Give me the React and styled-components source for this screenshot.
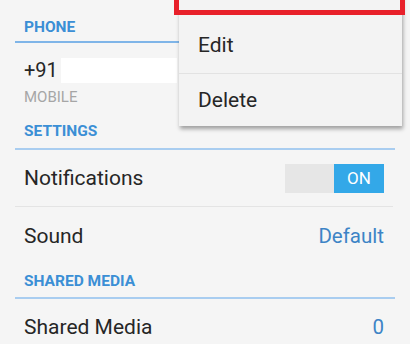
import React from "react";
import styled, { createGlobalStyle } from "styled-components";

const Global = createGlobalStyle`
  html, body { margin: 0; padding: 0; background: #f5f5f5; }
  body { font-family: Roboto, "Noto Sans", "Liberation Sans", sans-serif; -webkit-font-smoothing: antialiased; }
`;

const Page = styled.div`
  position: relative;
  width: 410px;
  height: 344px;
  overflow: hidden;
  background: #f5f5f5;
`;

const SectionHeader = styled.div`
  margin: 0 15px;
  padding: 0 9px ${(p) => p.$pb}px;
  height: ${(p) => p.$h}px;
  display: flex;
  align-items: flex-end;
  box-sizing: border-box;
  border-bottom: 2px solid ${(p) => p.$line};
  color: #3b8fd5;
  font-size: 15.5px;
  font-weight: 700;
  line-height: 18px;
`;

const PhoneBlock = styled.div`
  padding: 14px 24px 0;
  height: 64px;
  box-sizing: border-box;
`;

const PhoneLine = styled.div`
  display: flex;
  align-items: center;
  height: 26px;
  font-size: 20px;
  color: #262626;
`;

const Redacted = styled.span`
  display: inline-block;
  width: 116px;
  height: 25px;
  background: #ffffff;
  margin-left: 3px;
`;

const SubLabel = styled.div`
  margin-top: 5px;
  font-size: 15px;
  color: #a6a6a6;
`;

const Row = styled.div`
  margin: 0 17px 0 15px;
  padding: 0 9px;
  height: ${(p) => p.$h}px;
  display: flex;
  align-items: center;
  justify-content: space-between;
  box-sizing: border-box;
  border-bottom: ${(p) => (p.$divider ? "1px solid #e4e4e4" : "none")};
  font-size: 21px;
  color: #262626;
`;

const Value = styled.span`
  color: #3d84c6;
  font-size: 20.5px;
`;

const Toggle = styled.div`
  display: flex;
  width: 99px;
  height: 29px;
  background: #e6e6e6;
  justify-content: flex-end;
`;

const ToggleOn = styled.div`
  width: 50px;
  background: #33a8e8;
  color: #fff;
  font-size: 17px;
  display: flex;
  align-items: center;
  justify-content: center;
`;

const Menu = styled.div`
  position: absolute;
  left: 179px;
  top: -39px;
  width: 223px;
  background: #f3f3f3;
  box-shadow: 1px 3px 4px rgba(0, 0, 0, 0.35);
`;

const MenuItem = styled.div`
  height: ${(p) => p.$h}px;
  display: flex;
  align-items: center;
  padding-left: 19px;
  font-size: 21px;
  color: #262626;
  border-top: ${(p) => (p.$sep ? "1px solid #e2e2e2" : "none")};
  box-sizing: border-box;
`;

const Highlight = styled.div`
  position: absolute;
  left: -5px;
  top: 0;
  width: 221px;
  height: 44px;
  border: 5px solid #e8202a;
`;

export default function App() {
  return (
    <>
      <Global />
      <Page>
        <SectionHeader $h={43} $pb={5} $line="#7fb5e8">PHONE</SectionHeader>
        <PhoneBlock>
          <PhoneLine>
            +91<Redacted />
          </PhoneLine>
          <SubLabel>MOBILE</SubLabel>
        </PhoneBlock>
        <SectionHeader $h={43} $pb={8} $line="#a9cdf0">SETTINGS</SectionHeader>
        <Row $h={57} $divider>
          <span>Notifications</span>
          <Toggle>
            <ToggleOn>ON</ToggleOn>
          </Toggle>
        </Row>
        <Row $h={58}>
          <span>Sound</span>
          <Value>Default</Value>
        </Row>
        <SectionHeader $h={34} $pb={7} $line="#a9cdf0">SHARED MEDIA</SectionHeader>
        <Row $h={56}>
          <span>Shared Media</span>
          <Value>0</Value>
        </Row>
        <Menu>
          <MenuItem $h={56} />
          <MenuItem $h={56}>Edit</MenuItem>
          <MenuItem $h={53} $sep>Delete</MenuItem>
          <Highlight />
        </Menu>
      </Page>
    </>
  );
}
